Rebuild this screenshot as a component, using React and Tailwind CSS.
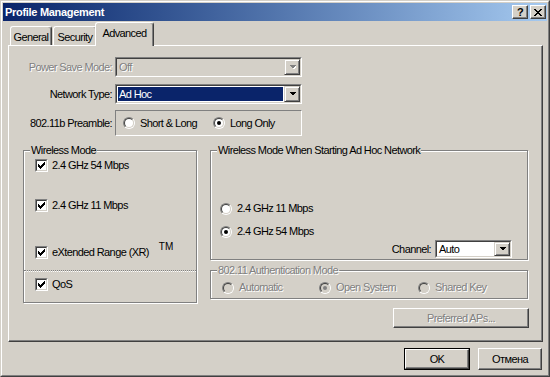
import React from 'react';

const font = "font-['Liberation_Sans',Arial,sans-serif]";
const dis = "text-[#808080] [text-shadow:1px_1px_0_#fff]";

// sunken 2px edge used by fields, checkboxes
const sunkOuter = "border border-t-[#808080] border-l-[#808080] border-b-white border-r-white";
const sunkInner = "border border-t-[#404040] border-l-[#404040] border-b-[#d4d0c8] border-r-[#d4d0c8]";
const raised = "border border-t-white border-l-white border-b-[#404040] border-r-[#404040] shadow-[inset_-1px_-1px_0_#808080]";

function Check({ checked }) {
  return (
    <span className={`w-[13px] h-[13px] flex shrink-0 ${sunkOuter}`}>
      <span className={`flex-1 flex items-center justify-center bg-white ${sunkInner}`}>
        {checked && (
          <svg width="7" height="7" viewBox="0 0 7 7" shapeRendering="crispEdges">
            <polygon points="0,2 2,4 7,-1 7,2 2,7 0,5" fill="#000" />
          </svg>
        )}
      </span>
    </span>
  );
}

function Radio({ on, disabled }) {
  return (
    <span className="w-[12px] h-[12px] rounded-full flex shrink-0 border border-t-[#808080] border-l-[#808080] border-b-white border-r-white">
      <span className={`flex-1 rounded-full flex items-center justify-center border border-t-[#404040] border-l-[#404040] border-b-[#d4d0c8] border-r-[#d4d0c8] ${disabled ? 'bg-[#d4d0c8]' : 'bg-white'}`}>
        {on && <span className={`w-[4px] h-[4px] rounded-full ${disabled ? 'bg-[#808080]' : 'bg-black'}`} />}
      </span>
    </span>
  );
}

function Arrow({ disabled }) {
  return (
    <span className="w-[16px] h-full flex items-center justify-center bg-[#d4d0c8] border border-t-[#d4d0c8] border-l-[#d4d0c8] border-b-[#404040] border-r-[#404040] shadow-[inset_1px_1px_0_#fff,inset_-1px_-1px_0_#808080]">
      <svg width="7" height="4" viewBox="0 0 7 4" shapeRendering="crispEdges">
        {disabled && <polygon points="1,1 8,1 4.5,4.5" fill="#fff" />}
        <polygon points="0,0 7,0 3.5,3.5" fill={disabled ? '#808080' : '#000'} />
      </svg>
    </span>
  );
}

function Combo({ value, disabled, selected, className = '' }) {
  return (
    <div className={`flex ${sunkOuter} ${className}`}>
      <div className={`flex-1 flex ${sunkInner} ${disabled ? 'bg-[#d4d0c8]' : 'bg-white'}`}>
        <div className="flex-1 flex p-[1px]">
          <span className={`flex-1 flex items-center pl-[1px] ${selected ? 'bg-[#0a246a] text-white' : disabled ? dis : ''}`}>{value}</span>
        </div>
        <Arrow disabled={disabled} />
      </div>
    </div>
  );
}

function Group({ title, disabled, className = '', children }) {
  return (
    <div className={`relative border border-[#808080] shadow-[inset_1px_1px_0_#fff,1px_1px_0_#fff] ${className}`}>
      <span className={`absolute left-[6px] -top-[7px] px-[1px] bg-[#d4d0c8] ${disabled ? dis : ''}`}>{title}</span>
      {children}
    </div>
  );
}

function Opt({ on, disabled, label, className = '' }) {
  return (
    <div className={`flex items-center gap-[5px] ${className}`}>
      <Radio on={on} disabled={disabled} />
      <span className={disabled ? dis : ''}>{label}</span>
    </div>
  );
}

function Tab({ label, active, className = '' }) {
  return (
    <div className={`flex justify-center pt-[4px] rounded-t-[3px] border-t border-l border-r border-t-white border-l-white border-r-[#404040] shadow-[inset_-1px_0_0_#808080] bg-[#d4d0c8] ${active ? 'h-[24px] -mb-[1px] relative z-10' : 'h-[19px]'} ${className}`}>
      {label}
    </div>
  );
}

function Btn({ children, disabled, def, className = '' }) {
  return (
    <div className={`flex ${def ? 'border border-black' : ''} ${className}`}>
      <div className={`flex-1 flex items-center justify-center ${raised} ${disabled ? dis : ''}`}>{children}</div>
    </div>
  );
}

export default function App() {
  return (
    <div className={`w-[550px] h-[377px] bg-[#d4d0c8] text-[11px] leading-[13px] tracking-[-0.6px] text-black border border-t-[#d4d0c8] border-l-[#d4d0c8] border-b-[#404040] border-r-[#404040] ${font}`}>
      <div className="h-full flex flex-col p-[1px] border border-t-white border-l-white border-b-[#808080] border-r-[#808080]">
        {/* Title bar */}
        <div className="h-[18px] flex items-center pl-[2px] pr-[1px] bg-linear-to-r from-[#0a246a] to-[#a6caf0]">
          <span className="flex-1 text-white font-bold tracking-[-0.3px]">Profile Management</span>
          <div className={`w-[16px] h-[14px] flex items-center justify-center bg-[#d4d0c8] font-bold text-[11px] ${raised}`}>?</div>
          <div className={`w-[16px] h-[14px] ml-[2px] flex items-center justify-center bg-[#d4d0c8] ${raised}`}>
            <svg width="8" height="7" viewBox="0 0 8 7" shapeRendering="crispEdges">
              <path d="M0 0h2v1h1v1h2v-1h1v-1h2v1h-1v1h-1v1h-1v1h1v1h1v1h1v1h-2v-1h-1v-1h-2v1h-1v1h-2v-1h1v-1h1v-1h1v-1h-1v-1h-1v-1h-1z" fill="#000" />
            </svg>
          </div>
        </div>

        {/* Tabs */}
        <div className="h-[23px] mt-[1px] flex items-end pl-[7px]">
          <Tab label="General" className="w-[42px]" />
          <Tab label="Security" className="w-[44px] ml-[1px]" />
          <Tab label="Advanced" active className="w-[59px] -ml-[2px]" />
        </div>

        {/* Panel */}
        <div className="ml-[5px] w-[535px] h-[297px] flex flex-col border border-t-white border-l-white border-b-[#404040] border-r-[#404040] shadow-[inset_-1px_-1px_0_#808080]">
          <div className="mt-[11px] flex items-center">
            <span className={`w-[103px] text-right ${dis}`}>Power Save Mode:</span>
            <Combo value="Off" disabled className="ml-[3px] w-[187px] h-[20px]" />
          </div>
          <div className="mt-[7px] flex items-center">
            <span className="w-[103px] text-right">Network Type:</span>
            <Combo value="Ad Hoc" selected className="ml-[3px] w-[187px] h-[20px]" />
          </div>
          <div className="mt-[6px] flex items-center">
            <span className="w-[103px] text-right">802.11b Preamble:</span>
            <div className="ml-[3px] w-[187px] h-[26px] flex items-center pl-[7px] border border-t-[#808080] border-l-[#808080] border-b-white border-r-white">
              <Opt label="Short & Long" className="w-[90px]" />
              <Opt label="Long Only" on />
            </div>
          </div>

          <div className="mt-[14px] flex">
            {/* Wireless Mode */}
            <Group title="Wireless Mode" className="ml-[14px] w-[174px] h-[153px] flex flex-col">
              <div className="mt-[8px] pl-[11px] flex items-center gap-[4px]">
                <Check checked /><span>2.4 GHz 54 Mbps</span>
              </div>
              <div className="mt-[27px] pl-[11px] flex items-center gap-[4px]">
                <Check checked /><span>2.4 GHz 11 Mbps</span>
              </div>
              <div className="mt-[34px] h-[13px] pl-[11px] flex items-center gap-[4px]">
                <Check checked /><span>eXtended Range (XR)</span>
                <span className="ml-[6px] self-start -mt-[6px] text-[10px] tracking-[0px]">TM</span>
              </div>
              <div className="mt-[11px] border-t border-dotted border-[#808080] border-b border-b-white" />
              <div className="mt-[6px] pl-[11px] flex items-center gap-[4px]">
                <Check checked /><span>QoS</span>
              </div>
            </Group>

            {/* Right column */}
            <div className="ml-[13px] w-[319px] flex flex-col">
              <Group title="Wireless Mode When Starting Ad Hoc Network" className="w-[318px] h-[110px] flex flex-col">
                <Opt label="2.4 GHz 11 Mbps" className="mt-[51px] pl-[9px]" />
                <Opt label="2.4 GHz 54 Mbps" on className="mt-[10px] pl-[9px]" />
                <div className="mt-[2px] pr-[15px] flex items-center justify-end">
                  <span>Channel:</span>
                  <Combo value="Auto" className="ml-[4px] w-[77px] h-[18px]" />
                </div>
              </Group>

              <Group title="802.11 Authentication Mode" disabled className="mt-[10px] w-[318px] h-[29px] flex items-start pt-[10px] pl-[11px]">
                <Opt label="Automatic" disabled className="w-[97px]" />
                <Opt label="Open System" on disabled className="w-[99px]" />
                <Opt label="Shared Key" disabled />
              </Group>

              <Btn disabled className="mt-[9px] self-end w-[136px] h-[20px]">Preferred APs...</Btn>
            </div>
          </div>
        </div>

        {/* Dialog buttons */}
        <div className="mt-[6px] flex justify-end pr-[5px]">
          <Btn def className="w-[66px] h-[22px]">OK</Btn>
          <Btn className="ml-[8px] w-[64px] h-[22px]">Отмена</Btn>
        </div>
      </div>
    </div>
  );
}
